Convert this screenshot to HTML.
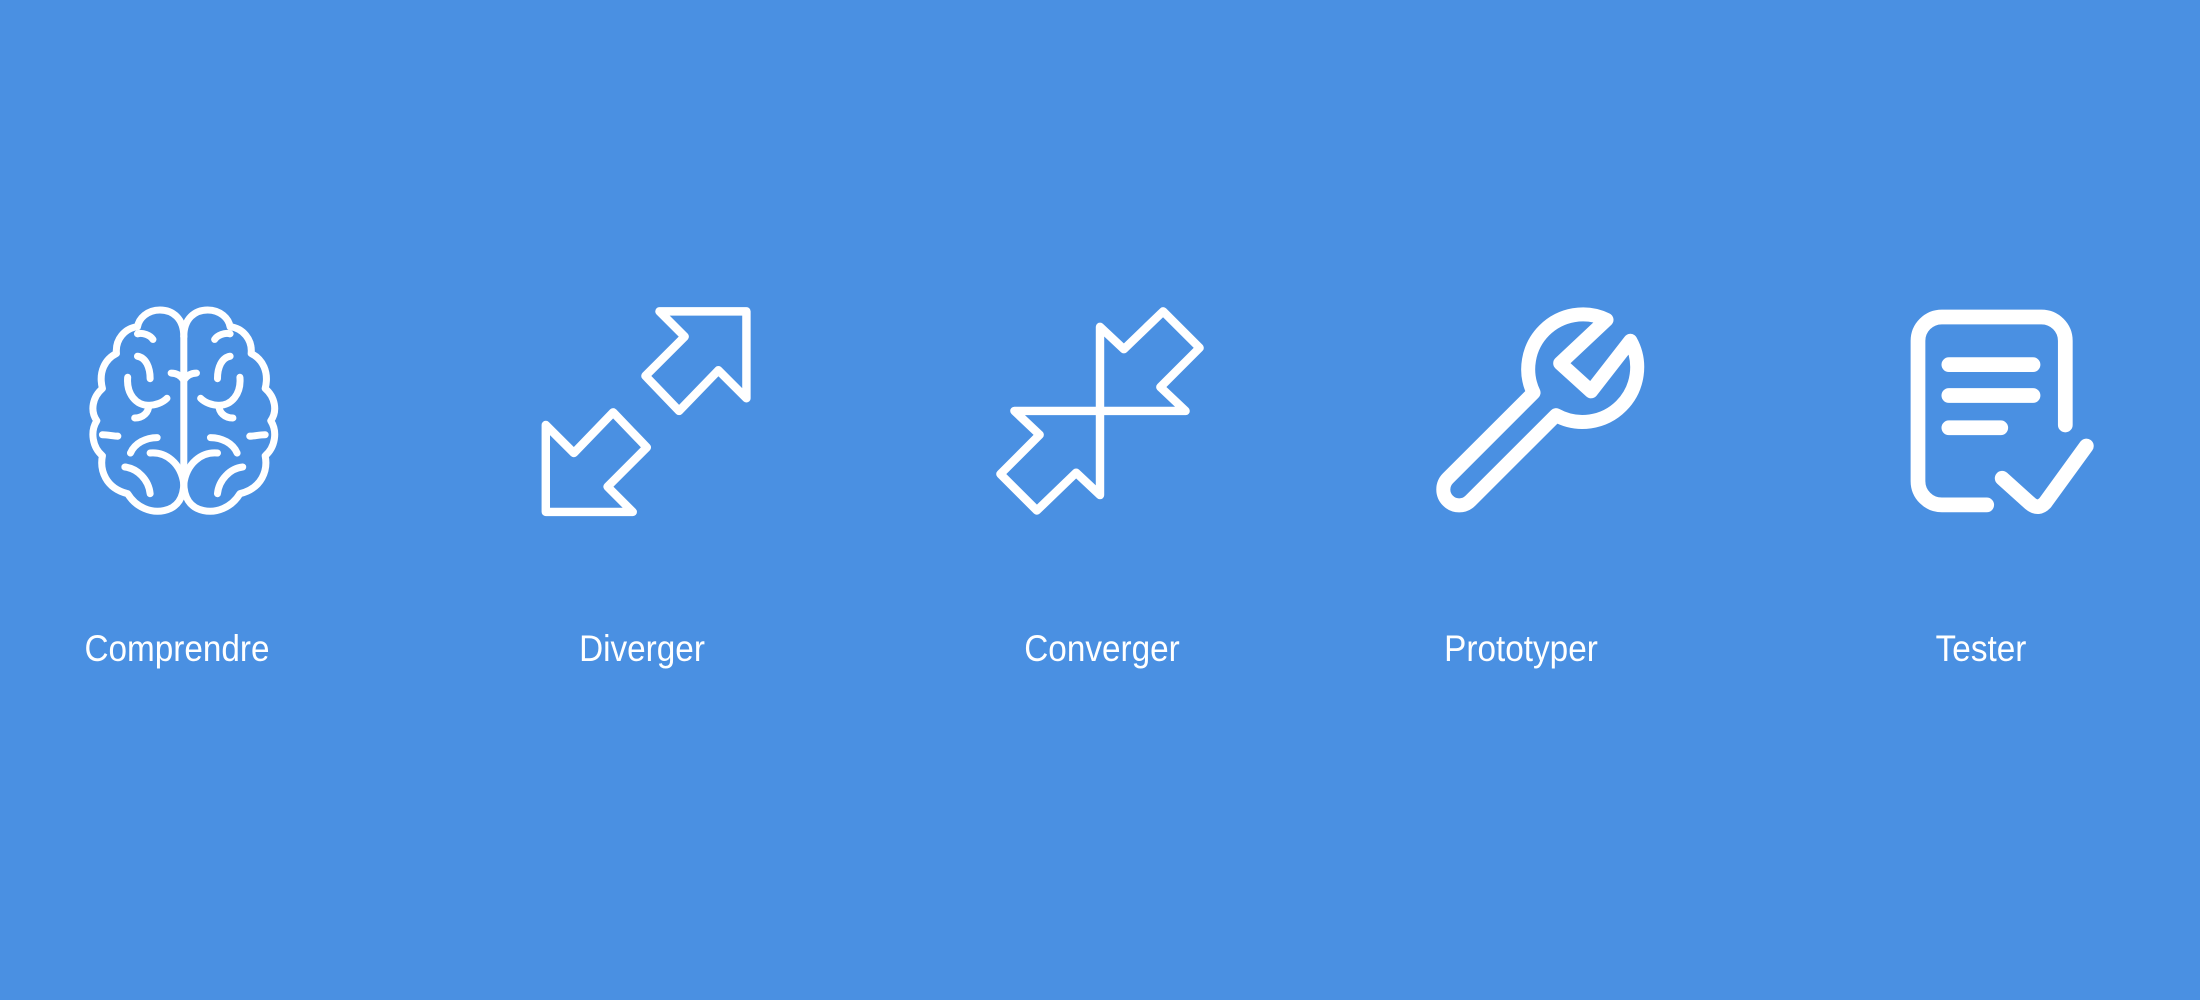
<!DOCTYPE html>
<html><head><meta charset="utf-8"><style>
html,body{margin:0;padding:0;}
body{width:2200px;height:1000px;background:#4a90e2;position:relative;overflow:hidden;font-family:"Liberation Sans",sans-serif;}
svg{position:absolute;left:0;top:0;}
.l{position:absolute;top:628px;color:#fff;font-size:37px;font-weight:300;width:400px;text-align:center;transform:scaleX(0.9);white-space:nowrap;}
</style></head><body>
<svg width="2200" height="1000" viewBox="0 0 1568 713" preserveAspectRatio="none" fill="none" stroke="#fff" stroke-linecap="round" stroke-linejoin="round">
<g stroke-width="5">
<g id="bh">
<path d="M131,240 C131,227 123,221 114,221 C105,221 99,227 98,233 C89,234 82,242 83,252 C75,256 70,265 73,277 C66,283 64,293 69,300 C64,308 66,319 73,325 C71,335 75,348 91,352 C97,362 108,366 117,364 C127,362 131,354 131,344"/>
<path d="M98,238 C102,237 107,239 109,242"/>
<path d="M91,269 C90,281 97,289 106,289 C111,289 116,287 119,284"/>
<path d="M106,289 C106,294 102,298 96,298"/>
<path d="M98,254 C104,255 107,262 107,270" />
<path d="M122,266 C126,266 129,268 131,271"/>
<path d="M73,310 C77,310 81,311 84,311"/>
<path d="M93,323 C96,316 104,312 112,312"/>
<path d="M107,323 C118,322 129,330 131,345"/>
<path d="M89,333 C98,334 106,342 107,352"/>
</g>
<use href="#bh" transform="translate(262,0) scale(-1,1)"/>
<path d="M131,240 V340"/>
</g>
<g stroke-width="6">
<path d="M470,222 L532,222 L532,284 L512,264 L484,293 L460,268 L488,240 Z"/>
<path d="M451,365 L389,365 L389,303 L409,323 L437,294 L461,319 L433,347 Z"/>
</g>
<g stroke-width="6">
<path d="M784,293 L784,233 L801,249 L829,222 L855,248 L827,276 L845,293 Z"/>
<path d="M784,293 L784,353 L767,337 L739,364 L713,338 L741,310 L723,293 Z"/>
</g>
<path stroke-width="10" d="M1032,341 L1093,280 A39,39 0 0 1 1145,228 L1112,259 L1134,279 L1162,243 A39,39 0 0 1 1109,296 L1048,357 A11,11 0 0 1 1032,341 Z"/>
<g stroke-width="10.5">
<path d="M1416,360 H1384 A17,17 0 0 1 1367,343 V243 A17,17 0 0 1 1384,226 H1455 A17,17 0 0 1 1472,243 V303"/>
<path d="M1389,260 H1449 M1389,282 H1449 M1389,305 H1426"/>
<path d="M1427,341 L1447,359 Q1453,364 1458,358 L1487,318"/>
</g>
</svg>
<div class="l" style="left:-23px">Comprendre</div>
<div class="l" style="left:442px">Diverger</div>
<div class="l" style="left:902px">Converger</div>
<div class="l" style="left:1321px">Prototyper</div>
<div class="l" style="left:1781px">Tester</div>
</body></html>
